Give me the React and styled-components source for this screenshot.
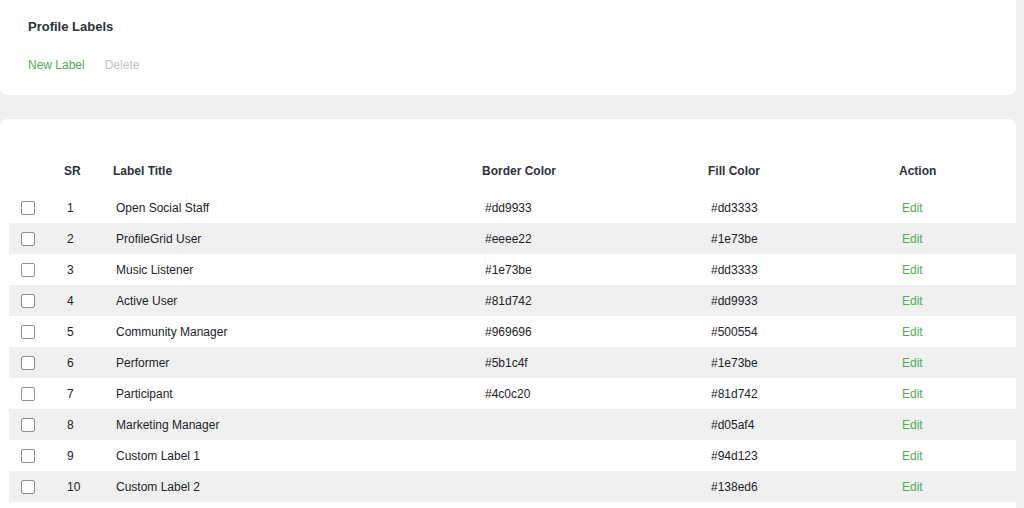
import React from 'react';
import styled, {createGlobalStyle} from 'styled-components';

const GlobalStyle = createGlobalStyle`
  body {
    margin: 0;
    background: #f0f0f0;
    font-family: "Liberation Sans", Arial, sans-serif;
    color: #1d2327;
  }
`

const Page = styled.div`
  width: 1016px;
  display: flex;
  flex-direction: column;
  gap: 24px;
`

const HeadCard = styled.div`
  background: #fff;
  border-radius: 0 0 8px 8px;
  height: 95px;
  box-sizing: border-box;
  padding: 19px 28px 0;
  h1 {
    margin: 0;
    font-size: 13px;
    font-weight: bold;
    color: #2c3338;
    line-height: 16px;
  }
`

const Actions = styled.div`
  display: flex;
  gap: 20px;
  margin-top: 22px;
`

const ActionLink = styled.a`
  font-size: 12px;
  line-height: 16px;
  color: ${p => (p.$disabled ? '#c3c4c7' : '#4caf50')};
  text-decoration: none;
  cursor: pointer;
`

const TableCard = styled.div`
  background: #fff;
  border-radius: 8px 8px 0 0;
  padding: 32px 0 10px 9px;
`

const Table = styled.table`
  width: 1007px;
  border-collapse: collapse;
  table-layout: fixed;
  font-size: 12px;

  th {
    text-align: left;
    font-weight: bold;
    color: #2c3338;
    height: 39px;
    padding: 0 0 2px 9px;
  }
  td {
    height: 31px;
    padding: 0 0 0 12px;
    color: #1d2327;
  }
  tbody tr:nth-child(even) {
    background: #f0f0f0;
  }
`

const Col = styled.col`
  width: ${p => (p.$w ? `${p.$w}px` : 'auto')};
`

const Check = styled.span`
  display: inline-block;
  width: 12px;
  height: 12px;
  border: 1px solid #8c8f94;
  border-radius: 2px;
  background: #fff;
  vertical-align: middle;
`

const Edit = styled.a`
  color: #4caf50;
  text-decoration: none;
  cursor: pointer;
`

const rows = [
  ['Open Social Staff', '#dd9933', '#dd3333'],
  ['ProfileGrid User', '#eeee22', '#1e73be'],
  ['Music Listener', '#1e73be', '#dd3333'],
  ['Active User', '#81d742', '#dd9933'],
  ['Community Manager', '#969696', '#500554'],
  ['Performer', '#5b1c4f', '#1e73be'],
  ['Participant', '#4c0c20', '#81d742'],
  ['Marketing Manager', '', '#d05af4'],
  ['Custom Label 1', '', '#94d123'],
  ['Custom Label 2', '', '#138ed6'],
]

const App = () => {
  return (
    <Page>
      <GlobalStyle />
      <HeadCard>
        <h1>Profile Labels</h1>
        <Actions>
          <ActionLink>New Label</ActionLink>
          <ActionLink $disabled>Delete</ActionLink>
        </Actions>
      </HeadCard>
      <TableCard>
        <Table>
          <colgroup>
            <Col $w={46} />
            <Col $w={49} />
            <Col $w={369} />
            <Col $w={226} />
            <Col $w={191} />
            <Col />
          </colgroup>
          <thead>
            <tr>
              <th></th>
              <th>SR</th>
              <th>Label Title</th>
              <th>Border Color</th>
              <th>Fill Color</th>
              <th>Action</th>
            </tr>
          </thead>
          <tbody>
            {rows.map((r, i) => (
              <tr key={i}>
                <td><Check /></td>
                <td>{i + 1}</td>
                <td>{r[0]}</td>
                <td>{r[1]}</td>
                <td>{r[2]}</td>
                <td><Edit>Edit</Edit></td>
              </tr>
            ))}
          </tbody>
        </Table>
      </TableCard>
    </Page>
  )
}

export default App;
